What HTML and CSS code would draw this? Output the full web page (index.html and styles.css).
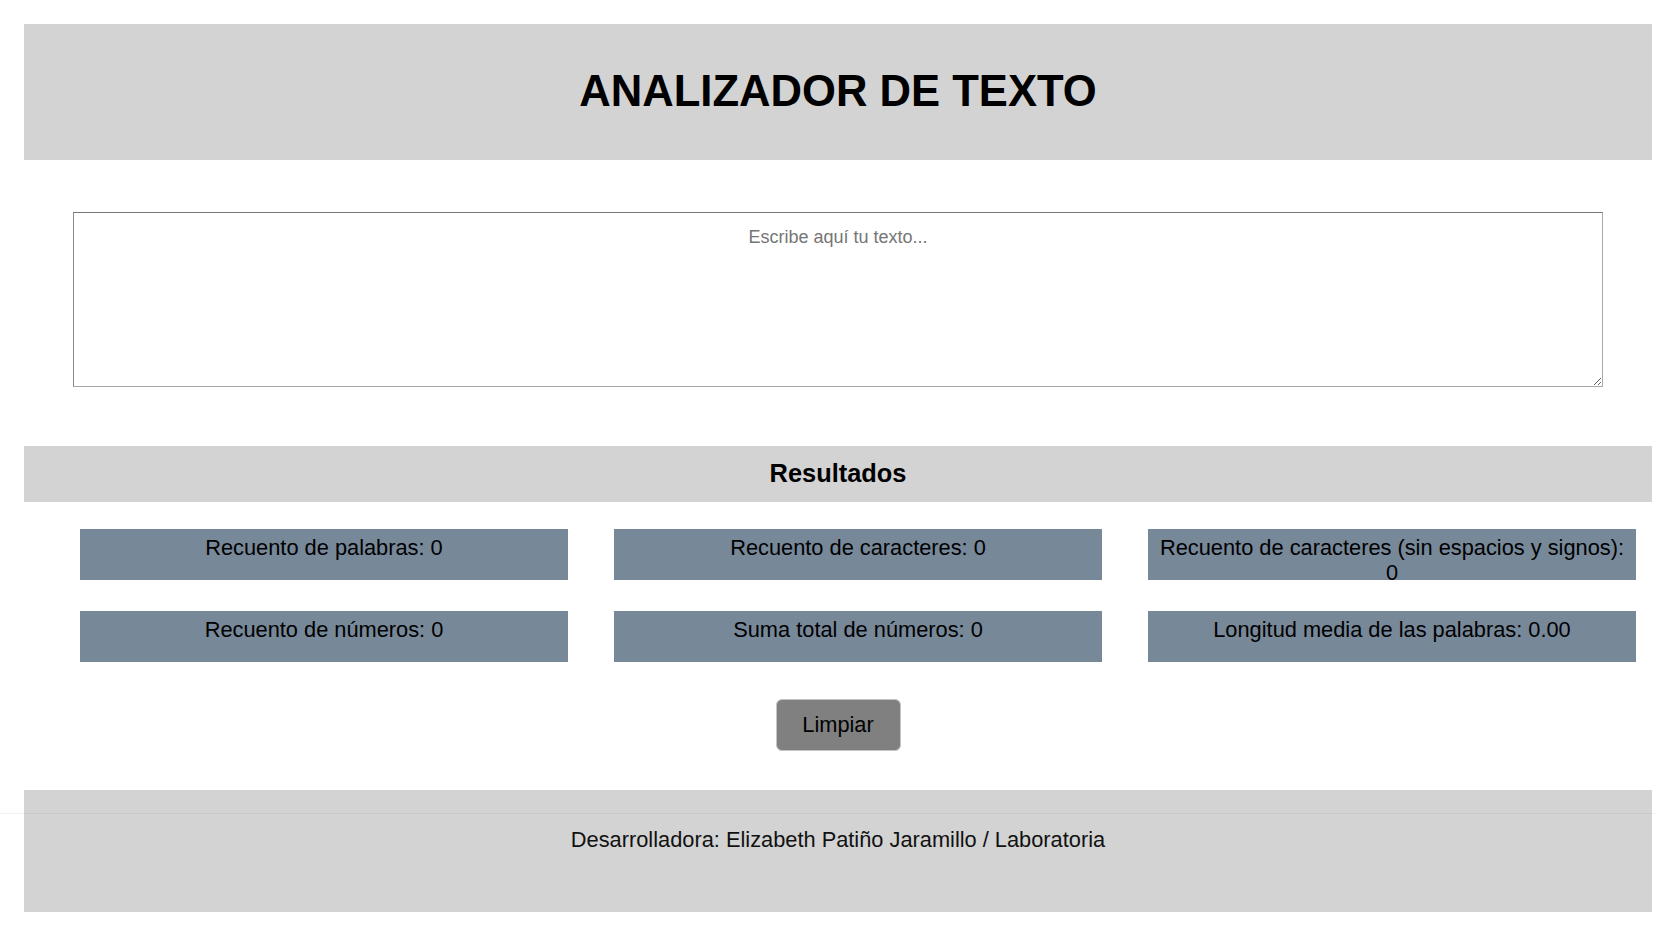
FILE: index.html
```html
<!DOCTYPE html>
<html lang="es">
<head>
<meta charset="utf-8">
<title>Analizador de texto</title>
<link rel="stylesheet" href="styles.css">
</head>
<body>
<div class="page">
  <header class="header">
    <h1 class="title">ANALIZADOR DE TEXTO</h1>
  </header>
  <main class="main">
    <textarea class="input" placeholder="Escribe aquí tu texto..."></textarea>
    <div class="results-bar"><h2 class="results-title">Resultados</h2></div>
    <ul class="metrics">
      <li class="metric">Recuento de palabras: 0</li>
      <li class="metric">Recuento de caracteres: 0</li>
      <li class="metric">Recuento de caracteres (sin espacios y signos): 0</li>
      <li class="metric">Recuento de números: 0</li>
      <li class="metric">Suma total de números: 0</li>
      <li class="metric">Longitud media de las palabras: 0.00</li>
    </ul>
    <div class="actions"><button class="btn" type="button">Limpiar</button></div>
  </main>
  <footer class="footer">
    <p class="credit">Desarrolladora: Elizabeth Patiño Jaramillo / Laboratoria</p>
  </footer>
</div>
</body>
</html>
```
FILE: styles.css
```css
html, body {
  margin: 0;
  padding: 0;
  background: #ffffff;
}
body {
  font-family: "Liberation Sans", Arial, sans-serif;
  color: #000;
}
.page {
  margin: 24px 4px 0 24px;
  display: flex;
  flex-direction: column;
}
.header {
  background: #d3d3d3;
  height: 136px;
  display: flex;
  align-items: center;
  justify-content: center;
}
.title {
  margin: 0;
  font-size: 43.6px;
  font-weight: bold;
  line-height: 1;
}
.main {
  display: flex;
  flex-direction: column;
}
.input {
  box-sizing: border-box;
  margin: 52px 49px 0 49px;
  width: 1530px;
  height: 175px;
  padding: 14px 4px 4px;
  border: 1px solid;
  border-color: #767676 #a8a8a8 #a8a8a8 #8a8a8a;
  font-family: "Liberation Sans", Arial, sans-serif;
  font-size: 18px;
  text-align: center;
  color: #000;
  background: #fff;
}
.input::placeholder {
  color: #757575;
}
.results-bar {
  margin-top: 59px;
  height: 56px;
  background: #d3d3d3;
  display: flex;
  align-items: center;
  justify-content: center;
}
.results-title {
  margin: 0;
  font-size: 25.4px;
  font-weight: bold;
  line-height: 1;
}
.metrics {
  list-style: none;
  margin: 27px 0 0 56px;
  padding: 0;
  display: grid;
  grid-template-columns: repeat(3, 488px);
  column-gap: 46px;
  row-gap: 31px;
}
.metric {
  box-sizing: border-box;
  height: 51px;
  padding: 7px 4px 0;
  background: #778899;
  font-size: 21.8px;
  line-height: 24.5px;
  text-align: center;
  color: #000;
}
.actions {
  margin-top: 37px;
  display: flex;
  justify-content: center;
}
.btn {
  box-sizing: border-box;
  width: 125px;
  height: 52px;
  background: #808080;
  border: 1px solid #c4c4c4;
  border-radius: 6px;
  font-family: "Liberation Sans", Arial, sans-serif;
  font-size: 21.8px;
  color: #000;
  padding: 0;
}
.footer {
  position: relative;
  margin-top: 39px;
  height: 122px;
  background: #d3d3d3;
  box-sizing: border-box;
  padding-top: 37px;
}
.footer::after {
  content: "";
  position: absolute;
  left: -24px;
  right: -4px;
  top: 23px;
  height: 1px;
  background: rgba(0, 0, 0, 0.05);
}
.credit {
  margin: 0;
  text-align: center;
  font-size: 21.8px;
  line-height: 25px;
  color: #111;
}
```
